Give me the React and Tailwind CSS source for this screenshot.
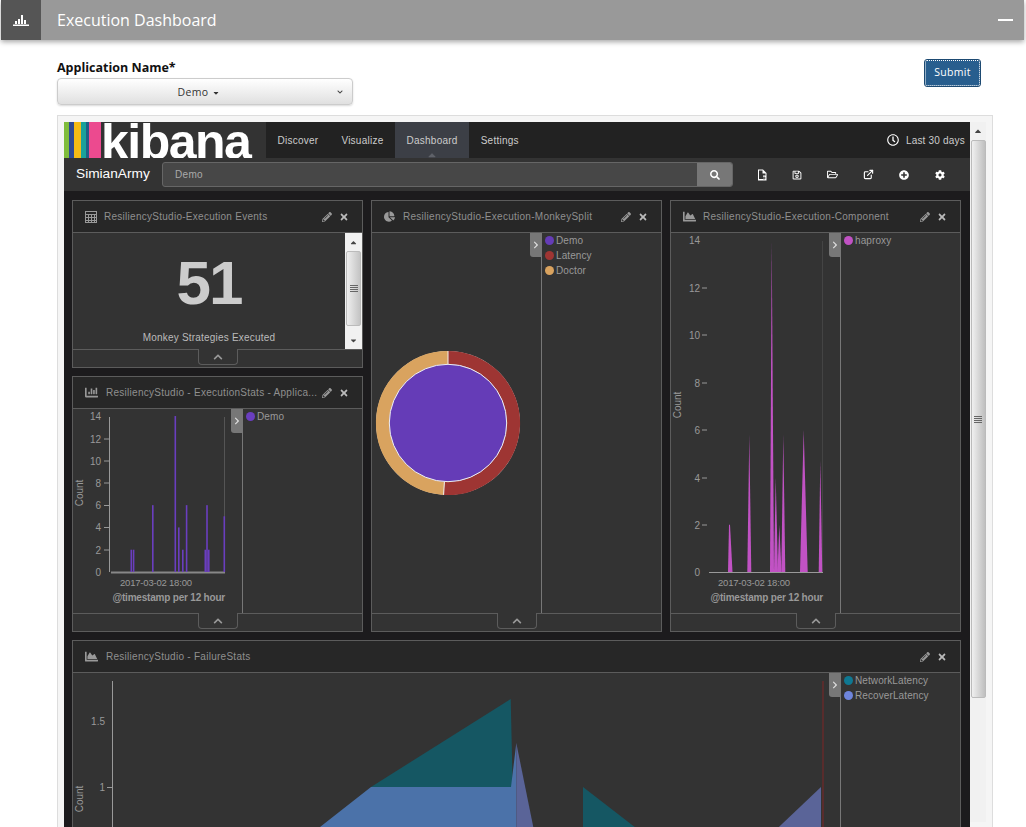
import React from 'react';
import {
  FaChartBar, FaChartPie, FaChartArea, FaPencilAlt, FaTimes, FaSearch, FaRegClock,
  FaRegSave, FaRegFolderOpen, FaPlusCircle, FaCog,
  FaChevronUp, FaChevronRight, FaCaretDown, FaCaretUp, FaChevronDown,
} from 'react-icons/fa';
import { ExternalLink } from 'lucide-react';

const kibanaFont = "font-['Liberation_Sans',Arial,sans-serif]";

const TableIcon = () => (
  <svg width="12" height="12" viewBox="0 0 12 12" fill="none" stroke="#999" strokeWidth="1">
    <rect x="0.5" y="0.5" width="11" height="11" />
    <path d="M0 3.5h12M0 6.5h12M0 9.5h12M3.5 3v9M6.5 3v9M9.5 3v9" />
  </svg>
);

const NewFileIcon = () => (
  <svg width="10" height="12" viewBox="0 0 10 12" fill="none">
    <path d="M1 .5h5l3.5 3.5v7.5H1z" fill="#fff" />
    <path d="M2 1.5h3.5v3H8.5v2H6v3.5H2z" fill="#333" />
    <path d="M7 7.5v3M5.5 9h3" stroke="#333" />
  </svg>
);

const Grip = () => (
  <div className="flex w-[8px] flex-col gap-[1px]">
    <div className="h-px bg-[#666]" />
    <div className="h-px bg-[#666]" />
    <div className="h-px bg-[#666]" />
    <div className="h-px bg-[#666]" />
  </div>
);

const CollapseTab = () => (
  <div className="absolute left-1/2 top-[-1px] -ml-5 flex h-[16px] w-[40px] items-center justify-center rounded-b-[4px] border-x border-b border-[#5c5c5c] bg-[#333]">
    <FaChevronUp size={10} className="text-[#999]" />
  </div>
);

const LegendToggle = () => (
  <div className="absolute right-0 top-0 flex h-[24px] w-[11px] items-center justify-center rounded-bl-[3px] bg-[#777]">
    <FaChevronRight size={8} className="text-[#ddd]" />
  </div>
);

const Legend = ({ items }) => (
  <div className="flex-1 border-l border-[#777] pl-[3px]">
    {items.map((item) => (
      <div key={item.label} className="flex h-[15px] items-center gap-[2px] text-[10px] tracking-[0.1px] text-[#999]">
        <span className="h-[9px] w-[9px] rounded-full" style={{ backgroundColor: item.color }} />
        {item.label}
      </div>
    ))}
  </div>
);

const Panel = ({ title, icon, iconClass = 'w-[19px]', className = '', noFooter, children }) => (
  <div className={`flex min-w-0 flex-col border border-[#5c5c5c] bg-[#333] ${className}`}>
    <div className="flex h-[32px] shrink-0 items-center border-b border-[#5c5c5c] bg-[#272727] pl-[12px] pr-[13px]">
      <span className={`flex shrink-0 items-center text-[#999] ${iconClass}`}>{icon}</span>
      <span className="min-w-0 flex-1 truncate text-[10px] tracking-[0.27px] text-[#8f8f8f]">{title}</span>
      <FaPencilAlt size={10} className="ml-1 shrink-0 text-[#999]" />
      <FaTimes size={10} className="ml-[7px] shrink-0 text-[#bbb]" />
    </div>
    <div className="flex min-h-0 flex-1">{children}</div>
    {!noFooter && (
      <div className="relative h-[18px] shrink-0 border-t border-[#5c5c5c]">
        <CollapseTab />
      </div>
    )}
  </div>
);

const Tick = ({ y, label, x = 28 }) => (
  <text x={x} y={y + 3.5} textAnchor="end" fontSize="10" fill="#999">{label}</text>
);

const AxisLabels = ({ dateY, titleY }) => (
  <>
    <text x="47" y={dateY} fontSize="9.5" letterSpacing="-0.2" fill="#999">2017-03-02 18:00</text>
    <text x="152" y={titleY} textAnchor="end" fontSize="10" fontWeight="bold" letterSpacing="-0.2" fill="#999">@timestamp per 12 hour</text>
  </>
);

const BarChart = () => {
  const bars = [[57.5, 2], [59.8, 2], [79, 6], [101.5, 14], [105, 4], [109, 2], [112.8, 6], [131.5, 2], [133.2, 6], [135, 2], [150.5, 5]];
  return (
    <svg width="158" height="204" className="block">
      {[[14, 7.5], [12, 30], [10, 52], [8, 74], [6, 96.5], [4, 118.5], [2, 141], [0, 163]].map(([v, y]) => (
        <g key={v}>
          <Tick y={y} label={v} x={28} />
          {v !== 14 && v !== 0 && <path d={`M31 ${y}h5`} stroke="#999" />}
        </g>
      ))}
      <path d="M36.5 8V163" stroke="#999" />
      <path d="M151.5 8V163" stroke="#555" />
      <path d="M38 163.5H152" stroke="#888" strokeWidth="2" />
      {bars.map(([x, v]) => (
        <rect key={x} x={x} y={163 - v * 11.14} width="1.6" height={v * 11.14} fill="#6a3ebf" />
      ))}
      <text x="10" y="84" fontSize="10" fill="#999" transform="rotate(-90 10 84)" textAnchor="middle">Count</text>
      <AxisLabels dateY={177} titleY={192} />
    </svg>
  );
};

const Donut = () => {
  const r = 65.4;
  const end = (183.5 * Math.PI) / 180;
  const ex = 76 + r * Math.sin(end);
  const ey = 73 - r * Math.cos(end);
  return (
    <svg width="152" height="146" className="block" viewBox="0 0 152 146">
      <circle cx="76" cy="73" r="72" fill="#ddd" />
      <path d={`M76 ${73 - r}A${r} ${r} 0 1 1 ${ex} ${ey}`} fill="none" stroke="#9e3533" strokeWidth="13.4" />
      <path d={`M${ex} ${ey}A${r} ${r} 0 0 1 76 ${73 - r}`} fill="none" stroke="#d9a35f" strokeWidth="13.4" />
      <path d="M76 1v14" stroke="#eee" />
      <path d={`M${76 + 58 * Math.sin(end)} ${73 - 58 * Math.cos(end)}L${76 + 72 * Math.sin(end)} ${73 - 72 * Math.cos(end)}`} stroke="#eee" />
      <circle cx="76" cy="73" r="58.7" fill="#653cb7" stroke="#eee" />
    </svg>
  );
};

const SpikeChart = () => {
  // [left, peak left, peak right, right, value]
  const spikes = [
    [57, 58, 59, 61.5, 2],
    [76.3, 78.3, 78.3, 80.3, 5.8],
    [99, 100.7, 100.7, 103, 14],
    [103, 104.7, 104.7, 107, 4],
    [106.5, 108.3, 108.3, 110.5, 2],
    [110.3, 112.3, 112.3, 114.3, 5.8],
    [129, 132.7, 132.7, 136.7, 6],
    [147.7, 149.3, 149.3, 151.3, 4.7],
  ];
  return (
    <svg width="158" height="380" className="block">
      {[[14, 240.7], [12, 288], [10, 335], [8, 383], [6, 430], [4, 478], [2, 525], [0, 572]].map(([v, y]) => (
        <g key={v}>
          <Tick y={y - 233} label={v} x={29} />
          {v !== 14 && v !== 0 && <path d={`M31 ${y - 233}h5`} stroke="#999" />}
        </g>
      ))}
      <path d="M38 339.5H152" stroke="#999" />
      <path d="M151.5 8V339" stroke="#444" />
      {spikes.map(([a, b, c, d, v]) => (
        <polygon key={a} points={`${a},339 ${b},${339 - v * 23.66} ${c},${339 - v * 23.66} ${d},339`} fill="#c152c4" />
      ))}
      <text x="10" y="172" fontSize="10" fill="#999" transform="rotate(-90 10 172)" textAnchor="middle">Count</text>
      <AxisLabels dateY={353} titleY={368} />
    </svg>
  );
};

// coordinates are page pixels, the viewBox starts at the chart's origin (73, 673)
const FailureChart = () => (
  <svg width="767" height="160" viewBox="73 673 767 160" className="block">
    <path d="M112.5 681V830" stroke="#999" />
    <text x="105" y="724.5" textAnchor="end" fontSize="10" fill="#999">1.5</text>
    <text x="105" y="790.5" textAnchor="end" fontSize="10" fill="#999">1</text>
    <path d="M107 787.5h5" stroke="#999" />
    <text x="83" y="799" fontSize="10" fill="#999" transform="rotate(-90 83 799)" textAnchor="middle">Count</text>
    <polygon points="371,787 510.7,699 512.7,787" fill="#155763" />
    <polygon points="320,827 371,787 511,787 516.3,743 516.3,830 316,830" fill="#4b72a9" />
    <polygon points="516.3,743 533.9,830 516.3,830" fill="#5a6498" />
    <polygon points="583,787 583,830 638.6,830" fill="#155763" />
    <polygon points="821,787 821,830 775.7,830" fill="#5a6498" />
    <path d="M823 681V830" stroke="#7f2626" />
  </svg>
);

export default function App() {
  return (
    <div className="h-[827px] overflow-hidden bg-white font-['Open_Sans',sans-serif]">
      {/* Title bar */}
      <div className="ml-px mr-[2px] flex h-10 items-center bg-[#999] shadow-[0_2px_5px_rgba(0,0,0,0.35)]">
        <div className="flex h-10 w-10 items-center justify-center bg-[#555]">
          <svg width="16" height="12" viewBox="0 0 16 12" fill="#fff">
            <path d="M0 10.5h16V12H0zM2 7h2v3H2zM5 5h2v5H5zM8 1h2v9H8zM11 6h2v4h-2z" />
          </svg>
        </div>
        <div className="ml-[16px] flex-1 text-[16px] text-white">Execution Dashboard</div>
        <div className="mr-[11px] h-[2px] w-[15px] bg-white" />
      </div>

      {/* Application select */}
      <div className="relative ml-[57px] mr-[46px] flex h-[75px] items-start justify-between">
        <div className="w-[296px] pt-[19px]">
          <div className="text-[12.5px] font-bold leading-[18px] text-[#111]">Application Name*</div>
          <div className="mt-[1px] flex h-[27px] items-center rounded-[4px] border border-[#ccc] bg-gradient-to-b from-white to-[#e0e0e0] pr-[9px] shadow-[0_1px_2px_rgba(0,0,0,0.15)]">
            <span className="flex flex-1 items-center justify-center gap-[3px] pl-[2px] pt-[3px] text-[10.5px] tracking-[0.4px] text-[#333]">
              Demo <FaCaretDown size={8} />
            </span>
            <FaChevronDown size={6} className="text-[#444]" />
          </div>
        </div>
        <button className="mt-[20px] h-[26px] w-[55px] rounded-[2px] border border-dotted border-white bg-[#285e8e] text-[10.5px] tracking-[0.3px] text-white outline outline-1 outline-[#1d4a72]">
          Submit
        </button>
      </div>

      {/* Embedded kibana frame */}
      <div className="ml-[57px] flex w-[936px] border border-[#ddd] bg-[#f5f5f5] p-[6px]">
        <div className={`w-[906px] bg-[#1c1b1d] ${kibanaFont}`}>
          <div className="flex h-[36px] items-stretch bg-[#222]">
            <div className="flex w-[202px] overflow-hidden bg-[#333]">
              <span className="w-[5px] bg-[#80bd3c]" />
              <span className="w-[5px] bg-[#2e4a94]" />
              <span className="w-[7px] bg-[#f5bb15]" />
              <span className="w-[5px] bg-[#1aa19a]" />
              <span className="w-[3px] bg-[#1d5f86]" />
              <span className="w-[12px] bg-[#ec4a8f]" />
              <span className="h-[36px] whitespace-nowrap text-[50px] font-bold leading-[41px] tracking-[-1.5px] text-white">kibana</span>
            </div>
            {['Discover', 'Visualize', 'Dashboard', 'Settings'].map((name) => (
              <div
                key={name}
                className={`relative flex items-center px-[11.5px] text-[10px] tracking-[0.25px] text-[#ccc] ${name === 'Dashboard' ? 'bg-[#3c3f46]' : ''}`}
              >
                {name}
                {name === 'Dashboard' && (
                  <FaCaretUp size={12} className="absolute bottom-[-3px] left-1/2 -ml-[6px] text-[#5f6269]" />
                )}
              </div>
            ))}
            <div className="flex flex-1 items-center justify-end gap-[7px] pr-[5px] text-[10px] tracking-[0.2px] text-[#ccc]">
              <FaRegClock size={12} className="text-white" />
              Last 30 days
            </div>
          </div>

          <div className="flex h-[33px] items-center bg-[#333] pl-[12px]">
            <div className="w-[86px] text-[13.7px] text-white">SimianArmy</div>
            <div className="flex h-[25px] w-[571px] overflow-hidden rounded-[3px] border border-[#666] bg-[#474747]">
              <div className="flex flex-1 items-center pl-[12px] text-[10px] tracking-[0.3px] text-[#aaa]">Demo</div>
              <div className="flex w-[35px] items-center justify-center bg-[#777]">
                <FaSearch size={10} className="text-white" />
              </div>
            </div>
            <div className="ml-[11px] flex items-center text-white">
              <span className="flex w-[35.6px] justify-center"><NewFileIcon /></span>
              <span className="flex w-[35.6px] justify-center"><FaRegSave size={10} /></span>
              <span className="flex w-[35.6px] justify-center"><FaRegFolderOpen size={11} /></span>
              <span className="flex w-[35.6px] justify-center"><ExternalLink size={11} strokeWidth={2.5} /></span>
              <span className="flex w-[35.6px] justify-center"><FaPlusCircle size={10} /></span>
              <span className="flex w-[35.6px] justify-center"><FaCog size={10} /></span>
            </div>
          </div>

          <div className="grid grid-cols-3 grid-rows-[168px_256px_auto] gap-2 pl-2 pr-[9px] pt-[9px]">
            <Panel title="ResiliencyStudio-Execution Events" icon={<TableIcon />}>
              <div className="flex flex-1">
                <div className="flex flex-1 flex-col items-center">
                  <div className="mt-[13px] text-[62px] font-bold leading-[74px] tracking-[-2px] text-[#ccc]">51</div>
                  <div className="mt-[10px] text-[10px] tracking-[0.2px] text-[#bbb]">Monkey Strategies Executed</div>
                </div>
                <div className="flex w-[17px] flex-col items-center bg-[#f1f1f1]">
                  <FaCaretUp size={9} className="mb-[4px] mt-[5px] text-[#444]" />
                  <div className="flex h-[75px] w-[15px] items-center justify-center rounded-[2px] border border-[#bbb] bg-gradient-to-r from-[#eee] to-[#c4c4c4]">
                    <Grip />
                  </div>
                  <FaCaretDown size={9} className="mb-[4px] mt-auto text-[#444]" />
                </div>
              </div>
            </Panel>

            <Panel title="ResiliencyStudio-Execution-MonkeySplit" icon={<FaChartPie size={11} />} className="row-span-2">
              <div className="relative flex w-[169px] shrink-0 flex-col justify-center">
                <Donut />
                <LegendToggle />
              </div>
              <Legend items={[{ label: 'Demo', color: '#653cb7' }, { label: 'Latency', color: '#9e3533' }, { label: 'Doctor', color: '#d9a35f' }]} />
            </Panel>

            <Panel title="ResiliencyStudio-Execution-Component" icon={<FaChartArea size={13} />} iconClass="w-[20px]" className="row-span-2">
              <div className="relative w-[169px] shrink-0">
                <SpikeChart />
                <LegendToggle />
              </div>
              <Legend items={[{ label: 'haproxy', color: '#c152c4' }]} />
            </Panel>

            <Panel title="ResiliencyStudio - ExecutionStats - Applica..." icon={<FaChartBar size={13} />} iconClass="w-[21px]" className="col-start-1 row-start-2">
              <div className="relative w-[169px] shrink-0">
                <BarChart />
                <LegendToggle />
              </div>
              <Legend items={[{ label: 'Demo', color: '#6a3ebf' }]} />
            </Panel>

            <Panel title="ResiliencyStudio - FailureStats" icon={<FaChartArea size={13} />} iconClass="w-[21px]" className="col-span-3 h-[230px]" noFooter>
              <div className="relative w-[767px] shrink-0">
                <FailureChart />
                <LegendToggle />
              </div>
              <Legend items={[{ label: 'NetworkLatency', color: '#0f7892' }, { label: 'RecoverLatency', color: '#6e85dc' }]} />
            </Panel>
          </div>
        </div>

        {/* Frame scrollbar */}
        <div className="flex h-[700px] w-[16px] flex-col items-center bg-[#f1f1f1]">
          <FaCaretUp size={10} className="my-[4px] text-[#444]" />
          <div className="flex h-[558px] w-[15px] items-center justify-center rounded-[2px] border border-[#bbb] bg-gradient-to-r from-[#f0f0f0] to-[#bfbfbf]">
            <Grip />
          </div>
        </div>
      </div>
    </div>
  );
}
